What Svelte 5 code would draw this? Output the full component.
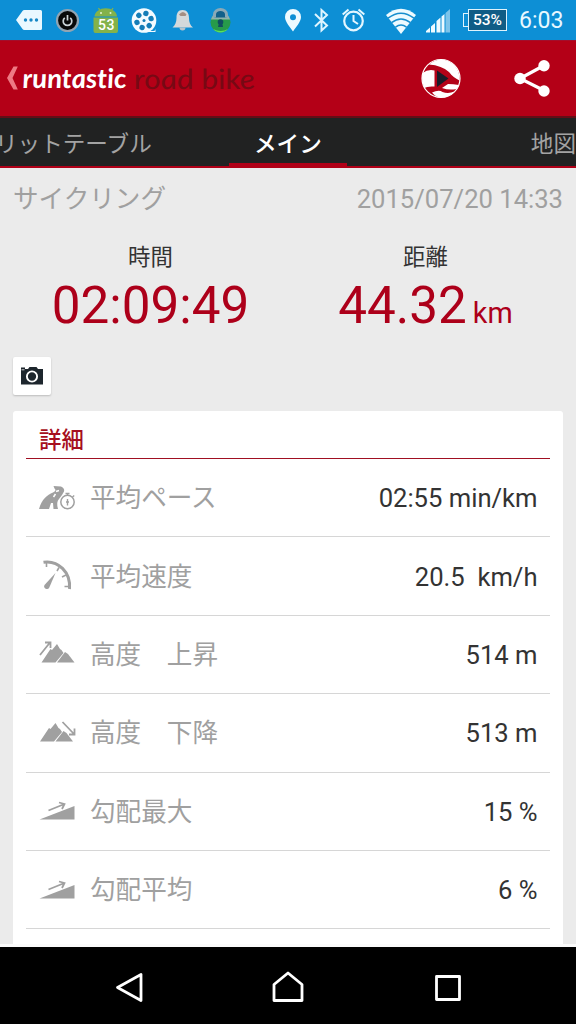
<script>
  const rows = [
    { icon: 'pace', label: '平均ペース', value: '02:55 min/km' },
    { icon: 'speed', label: '平均速度', value: '20.5  km/h' },
    { icon: 'up', label: '高度　上昇', value: '514 m' },
    { icon: 'down', label: '高度　下降', value: '513 m' },
    { icon: 'grade', label: '勾配最大', value: '15 %' },
    { icon: 'grade', label: '勾配平均', value: '6 %' }
  ];
  const holes = [0, 60, 120, 180, 240, 300];
</script>

<div class="screen">
  <div class="status">
    <svg class="notes" width="240" height="40" viewBox="0 0 240 40">
      <path d="M16 20 22.500 11Q23 10 24.500 10H40.500Q42 10 42 11.500V28.500Q42 30 40.500 30H24.500Q23 30 22.500 29Z" fill="#e9f8ff" />
      <g fill="#1687c6"><circle cx="25.500" cy="20" r="1.700" /><circle cx="31" cy="20" r="1.700" /><circle cx="36.500" cy="20" r="1.700" /></g>
      <circle cx="67.500" cy="20.500" r="10.500" fill="#080909" stroke="#91a4b2" stroke-width="2.200" />
      <path d="M64.800 17.800a4.300 4.300 0 1 0 5.400 0M67.500 15v5.500" fill="none" stroke="#cbd3d7" stroke-width="1.700" />
      <path d="M94.500 16.500a11 8 0 0 1 22.500 0ZM93.500 17.500h24.500V31q0 2-2 2H95.500q-2 0-2-2Z" fill="#83b24a" />
      <path d="M100 10.500 98.500 8M111.500 10.500 113 8" stroke="#83b24a" stroke-width="1.300" />
      <circle cx="101" cy="13" r="1" fill="#e4f2cf" /><circle cx="110.500" cy="13" r="1" fill="#e4f2cf" />
      <text x="106.500" y="30" class="badge" text-anchor="middle">53</text>
      <circle cx="144" cy="20.500" r="12.300" fill="#f3fbff" />
      <path d="M145 31h8.500q2 0 2-2.500v3.500H144Z" fill="#f3fbff" />
      <g fill="#147db7">
        {#each holes as a}
          <circle cx="144" cy="13.200" r="2.700" transform="rotate({a + 15} 144 20.500)" />
        {/each}
        <circle cx="144" cy="20.500" r="1.500" />
      </g>
      <path d="M182.500 10c-4.500 0-6 3.500-6 8 0 4-1.500 7.500-4 9.500h20.500c-2.800-2-4-5.500-4-9.500 0-4.500-2-8-6.500-8Z" fill="#d4d9db" />
      <path d="M179.500 27.500a3 3 0 0 0 6 0Z" fill="#b8c4ca" /><path d="M179 14.500q4-5 7.500 0l-1 1.500h-5Z" fill="#a48e83" />
      <circle cx="220.500" cy="22.500" r="10" fill="#279a4a" />
      <path d="M210.800 19.500a10 10 0 0 1 19.400 0Z" fill="#8fb3ac" /><path d="M213 29a10 10 0 0 0 15 0q-7 4-15 0Z" fill="#5ae05c" />
      <path d="M214.500 17.500v-3a6 5 0 0 1 12 0v3" fill="#12608a" stroke="#8aa9b7" stroke-width="3" />
      <circle cx="220.500" cy="22" r="2.800" fill="#114c60" /><path d="M219.200 22h2.800l1 5h-5Z" fill="#114c60" />
    </svg>
    <svg class="system" width="184" height="40" viewBox="276 0 184 40">
      <path fill-rule="evenodd" d="M293 9a8 8 0 0 0-8 8c0 5 5.500 10.500 8 14.500 2.500-4 8-9.500 8-14.500a8 8 0 0 0-8-8Zm0 5.200a3 3 0 1 1 0 6 3 3 0 0 1 0-6Z" fill="#edfaff" />
      <path d="M315 14l12 11.500-5.500 5V10l5.500 5L315 26.500" fill="none" stroke="#dff5ff" stroke-width="2" />
      <circle cx="353.500" cy="21" r="9.300" fill="none" stroke="#e4f6ff" stroke-width="2.200" />
      <path d="M353.500 15v6l4.500 3M342.700 14.500l5.800-5M358.500 9.500l5.800 5" fill="none" stroke="#e4f6ff" stroke-width="2" />
      <path d="M386 15Q401 2.500 416 15L401 34Z" fill="#edfaff" />
      <g fill="none" stroke="#168dce" stroke-width="1.500"><path d="M388 18.200q13-10 26 0" /><path d="M391.500 22.700q9.500-7.500 19 0" /><path d="M395.500 27.200q5.500-4.500 11 0" /></g>
      <g fill="#edfaff"><path d="M426 32.500V31l4-3.500v5ZM431 32.500v-6l4-3.500v9.500ZM436.500 32.500V21l4-3.500v15Z" /><path d="M441.500 32.500V16.500l3-2.500v18.500Z" /><path d="M445.500 32.500V13l4.500-4v23.500Z" opacity=".5" /></g>
    </svg>
    <div class="battery"><i></i><span>53%</span></div>
    <span class="clock">6:03</span>
  </div>

  <header>
    <svg class="brand" width="262" height="77" viewBox="0 0 262 77">
      <path d="M13.500 26.500h4.300L12.500 38l5.300 11.500h-4.300L7 38Z" fill="#ee7a84" />
      <text transform="translate(23 48.300) skewX(4)" class="run" textLength="104" lengthAdjust="spacingAndGlyphs">runtastic</text>
      <text transform="translate(135 48.800) skewX(8)" class="road" textLength="121" lengthAdjust="spacingAndGlyphs">road bike</text>
    </svg>
    <svg class="globe" width="42" height="42" viewBox="0 0 42 42">
      <circle cx="21" cy="20.500" r="19" fill="#b30218" stroke="#fff" stroke-width="1.200" />
      <path d="M9 6.500Q14 2 21 1.500q8 0 13.500 6 5.500 6 5 15Q33 19.500 29 14 22 7.500 9 6.500Z" fill="#fff" />
      <path d="M2.500 15Q8 11 14.500 12.500V28.500Q7 28 4.500 30 1 23 2.500 15Z" fill="#fff" />
      <path d="M39 27Q33 26 28 26L22 30q7 2.500 14.500 1Q38.500 29 39 27ZM12 34.500q7-3 10.500-.5 6 2 12-.500-5 6-13.500 6-5 0-9-5Z" fill="#fff" />
      <path d="M17 12.500 28.500 20.500 17 29Z" fill="#191c29" />
    </svg>
    <svg class="share" width="36" height="38" viewBox="0 0 36 38">
      <path d="M30 5.500 6 18.500 30 30.500" fill="none" stroke="#fff" stroke-width="3.200" />
      <g fill="#fff"><circle cx="30" cy="5.800" r="5.700" /><circle cx="6" cy="18.500" r="5.700" /><circle cx="30" cy="31" r="5.700" /></g>
    </svg>
  </header>

  <nav class="tabs">
    <span class="tab first">リットテーブル</span>
    <span class="tab active">メイン</span>
    <span class="tab last">地図</span>
  </nav>

  <main>
    <div class="meta"><span>サイクリング</span><time>2015/07/20 14:33</time></div>
    <section class="totals">
      <div class="total"><h2>時間</h2><p>02:09:49</p></div>
      <div class="total"><h2>距離</h2><p>44.32<small>km</small></p></div>
    </section>
    <button class="camera" aria-label="写真">
      <svg width="24" height="20" viewBox="0 0 24 20">
        <path d="M1 3V1.500h4V3h3l1.500-2h7L18 3h5v15.500H1Z" fill="#1d262d" />
        <circle cx="12" cy="10.500" r="5.100" fill="none" stroke="#fff" stroke-width="1.900" />
        <path d="M1.500 3.800h3" stroke="#fff" stroke-width=".8" />
      </svg>
    </button>
    <section class="card">
      <h3>詳細</h3>
      {#each rows as row}
        <div class="row">
          <svg width="38" height="36" viewBox="0 0 38 36">
            {#if row.icon === 'pace'}
              <path d="M0 30C3 20 8 16 14 13.500q4-2 1.500-4L14.500 7l7.500.5q4 2 3 5l-2 3.500-3 4q-3 3-1 10h-4.500l-.5-6h-2l-2 6Z" fill="#a0a0a0" />
              <path d="M17 12.500l3-1M14.500 18l2-3" stroke="#fff" stroke-width="1.500" />
              <circle cx="28.500" cy="23" r="6.700" fill="#fff" stroke="#a0a0a0" stroke-width="1.500" />
              <path d="M28.500 16.500v-2M26.500 14.500h4M33.500 18l1.700-1.500M28.500 20v6.500M27 23h3" stroke="#a0a0a0" stroke-width="1.400" />
            {:else if row.icon === 'speed'}
              <path d="M4.500 5.200C19 3 32 15 30.500 32" fill="none" stroke="#a0a0a0" stroke-width="3" />
              <path d="M7.500 6v4M20 10.500l-2 3.500M27 18l-4 2M30.500 29.500h-5" stroke="#a0a0a0" stroke-width="1.600" />
              <path d="M16.500 16 5.500 28a2.700 2.700 0 1 0 4.800 2.500Z" fill="#a0a0a0" />
            {:else if row.icon === 'up' || row.icon === 'down'}
              <g transform={row.icon === 'down' ? 'translate(-1.500 0)' : ''}>
                <path d="M2.500 27.500 11.500 14l1.500 1L18 9l3 5 1.500 1 2 3L16.500 27.500Z" fill="#a0a0a0" />
                <path d="M18 27.500l8-10.500 3 2 6.500 8.500Z" fill="#a0a0a0" />
              </g>
              {#if row.icon === 'up'}
                <path d="M1 20 11 7.500M6 7.500h5.500V13" fill="none" stroke="#a0a0a0" stroke-width="1.800" />
              {:else}
                <path d="M23.500 8 35 20M35.500 14.500v6H30" fill="none" stroke="#a0a0a0" stroke-width="1.800" />
              {/if}
            {:else}
              <path d="M.5 27.500 35.500 14V27.500Z" fill="#a0a0a0" />
              <path d="M9.500 18.500 25.500 12M20 10.500l5.500 1.500-2.500 5" fill="none" stroke="#a0a0a0" stroke-width="1.800" />
            {/if}
          </svg>
          <span class="label">{row.label}</span>
          <span class="value">{row.value}</span>
        </div>
      {/each}
    </section>
  </main>

  <footer>
    <svg width="36" height="36" viewBox="0 0 36 36"><path d="M7.500 18.500 31 5.500v26Z" /></svg>
    <svg width="36" height="36" viewBox="0 0 36 36"><path d="M4 15.500 18 4l14 11.500v16H4Z" /></svg>
    <svg width="36" height="36" viewBox="0 0 36 36"><path d="M6.500 7.500h23v23h-23Z" /></svg>
  </footer>
</div>

<style>
  :global(body) { margin: 0; }
  * { box-sizing: border-box; }
  .screen { width: 576px; height: 1024px; display: flex; flex-direction: column; overflow: hidden; background: #ebebeb; font-family: Roboto, "Noto Sans CJK JP", sans-serif; }
  svg { display: block; flex: none; }
  .status { height: 40px; flex: none; display: flex; align-items: center; background: #0d8fd5; }
  .system { margin-left: 36px; }
  .badge { font: 500 14px Roboto, sans-serif; fill: #fff; letter-spacing: .5px; }
  .battery { display: flex; align-items: center; margin-left: 3px; }
  .battery i { width: 5px; height: 14px; border: 1.5px solid #dff3fc; border-right: 0; }
  .battery span { width: 39px; height: 22px; border: 1.5px solid #dff3fc; background: #105d86; color: #fff; font-size: 15.5px; font-weight: 500; line-height: 20px; text-align: center; }
  .clock { margin-left: 12px; color: #e9f8ff; font-size: 23px; line-height: 40px; white-space: nowrap; padding-top: 2px; }
  header { height: 78px; flex: none; display: flex; align-items: center; background: #b40017; border-bottom: 2px solid #640e17; border-top: 1px solid #a30e2b; }
  .run { font: italic 700 27px Lato, sans-serif; fill: #fff; font-variant-ligatures: none; }
  .road { font: italic 400 28px Lato, sans-serif; fill: #770914; font-variant-ligatures: none; }
  .globe { margin-left: 158px; }
  .share { margin-left: 52px; }
  .tabs { height: 50px; flex: none; display: flex; background: #212222; border-bottom: 2px solid #b00017; color: #a3a3a3; font-size: 22.6px; line-height: 54px; white-space: nowrap; }
  .first { width: 234px; margin-left: -5px; }
  .active { width: 118px; color: #fff; text-align: center; font-weight: 500; border-bottom: 3px solid #b00017; }
  .last { margin-left: 184px; }
  main { height: 779px; flex: none; padding: 0 13px; overflow: hidden; border-bottom: 3px solid #fbfbfb; }
  .meta { height: 62px; display: flex; justify-content: space-between; color: #a0a0a0; font-size: 25.6px; line-height: 63px; }
  .totals { height: 127px; display: flex; }
  .total { width: 275px; text-align: center; }
  h2 { margin: 12px 0 0; height: 30px; font-size: 22.4px; line-height: 31px; font-weight: 400; color: #333; }
  p { margin: 0; font-size: 51.2px; line-height: 68px; color: #ad001a; white-space: nowrap; }
  small { font-size: 28.8px; margin-left: 6px; }
  .camera { width: 38px; height: 38px; display: flex; align-items: center; justify-content: center; padding: 0; border: 0; border-radius: 2px; background: #fff; box-shadow: 0 1px 2px #bbb; }
  .card { height: 560px; margin-top: 16px; padding: 0 13px; border-radius: 3px 3px 0 0; background: #fff; }
  h3 { margin: 0; height: 48px; padding-left: 13px; border-bottom: 1px solid #a00f22; font-size: 22.4px; font-weight: 500; line-height: 58px; color: #a60f20; }
  .row { height: 78.4px; display: flex; align-items: center; padding: 1px 13px 0; border-bottom: 1px solid #d6d6d6; color: #a0a0a0; font-size: 25.6px; line-height: 36px; }
  .row svg { margin-top: -3px; }
  .label { margin-left: 13px; }
  .value { margin-left: auto; margin-right: -.5px; color: #333; white-space: pre; }
  footer { height: 77px; flex: none; display: flex; justify-content: center; gap: 124px; padding-top: 22px; background: #000; }
  footer path { fill: none; stroke: #fff; stroke-width: 2.800; stroke-linejoin: round; }
</style>
